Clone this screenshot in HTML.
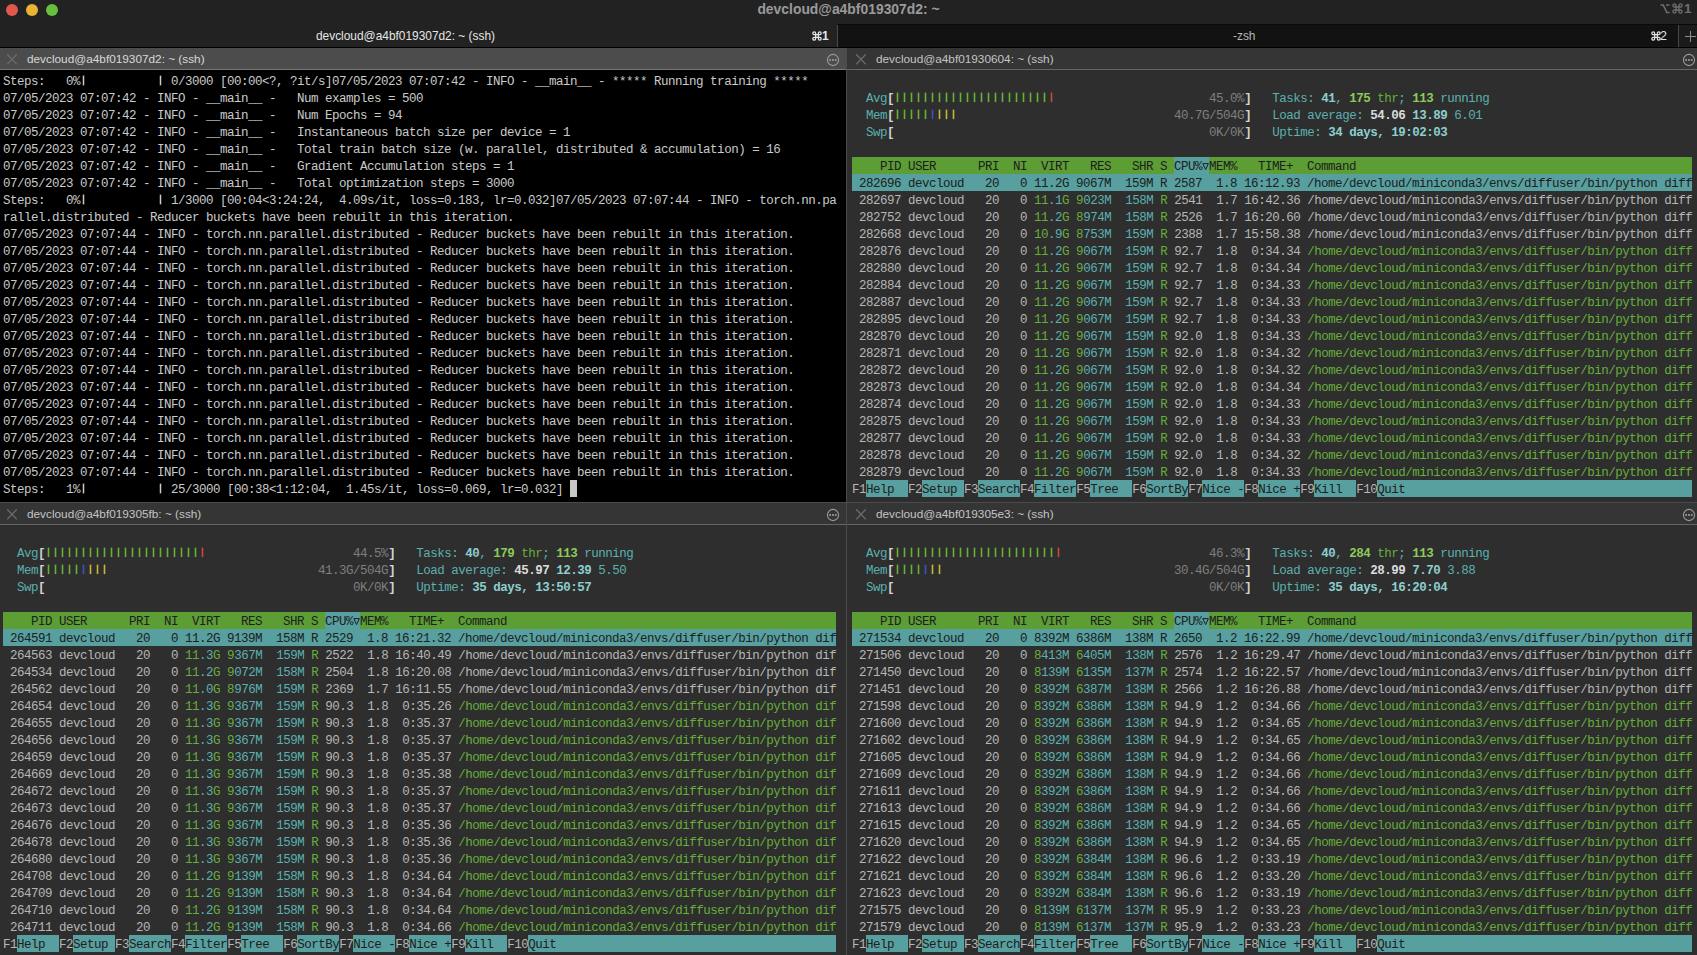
<!DOCTYPE html><html><head><meta charset="utf-8"><style>
*{margin:0;padding:0;box-sizing:border-box}
html,body{width:1697px;height:955px;overflow:hidden;background:#222222}
body{position:relative;font-family:"Liberation Sans",sans-serif}
.abs{position:absolute}
.pane{position:absolute;overflow:hidden}
.hdr{position:absolute;height:21px}
.term{position:absolute;font-family:"Liberation Mono",monospace;font-size:12.5px;letter-spacing:-0.5px;line-height:17px;white-space:pre}
.r{position:absolute;left:0;height:17px;white-space:pre}
.r span{display:inline-block;height:17px;vertical-align:top}
.tx{position:relative;top:2px}
/* htop colours (dimmed) */
.hg{color:#b6b6b6}
.hgr{color:#66ad3a}
.hcy{color:#5bb0b0}
.hdk{color:#1c2020}
.hdim{color:#7f7f7f}
.hbr{color:#d4d4d4;font-weight:bold}
.hred{color:#c0493b}
.hblu{color:#3d4fc4}
.hyel{color:#c4b23a}
.bcy{color:#8ccfcf;font-weight:bold}
.bgr{color:#8acb5a;font-weight:bold}
.bwh{color:#dcdcdc;font-weight:bold}
.bggr{background:#5c9d34}
.bgteal{background:#589f9f}
</style></head><body>
<div class="abs" style="left:0;top:0;width:1697px;height:24px;background:#222222"></div>
<div class="abs" style="left:6px;top:4px;width:12px;height:12px;border-radius:50%;background:#e0574d"></div>
<div class="abs" style="left:26px;top:4px;width:12px;height:12px;border-radius:50%;background:#ebb334"></div>
<div class="abs" style="left:46px;top:4px;width:12px;height:12px;border-radius:50%;background:#66bf3f"></div>
<div class="abs" style="left:0;top:1px;width:1697px;text-align:center;font-weight:bold;font-size:13.9px;color:#9a9a9a;line-height:17px;padding-left:0px">devcloud@a4bf019307d2: ~</div>
<svg class="abs" style="left:1660px;top:3px" width="10" height="11" viewBox="0 0 10 11"><path d="M0.5 2 H3.2 L6.8 9.5 H9.5 M6 2 H9.5" fill="none" stroke="#6e6e6e" stroke-width="1.6"/></svg>
<svg class="abs" style="left:1672px;top:3px" width="11" height="11" viewBox="0 0 12 12"><path d="M4.4 4.4 H7.6 V7.6 H4.4 Z M4.4 4.4 V2.7 A1.7 1.7 0 1 0 2.7 4.4 H4.4 M7.6 4.4 V2.7 A1.7 1.7 0 1 1 9.3 4.4 H7.6 M4.4 7.6 V9.3 A1.7 1.7 0 1 1 2.7 7.6 H4.4 M7.6 7.6 V9.3 A1.7 1.7 0 1 0 9.3 7.6 H7.6" fill="none" stroke="#6e6e6e" stroke-width="1.5"/></svg>
<div class="abs" style="left:1684px;top:0px;font-weight:bold;font-size:13.5px;color:#6e6e6e;line-height:17px">1</div>
<div class="abs" style="left:837px;top:24px;width:860px;height:1px;background:#0a0a0a"></div>
<div class="abs" style="left:0;top:24px;width:837px;height:23px;background:#222222"></div>
<div class="abs" style="left:837px;top:25px;width:1px;height:22px;background:#4a4a4a"></div>
<div class="abs" style="left:838px;top:25px;width:840px;height:22px;background:#121212"></div>
<div class="abs" style="left:1678px;top:25px;width:1px;height:22px;background:#4a4a4a"></div>
<div class="abs" style="left:1679px;top:25px;width:18px;height:22px;background:#1b1b1b"></div>
<div class="abs" style="left:1690px;top:31px;width:1px;height:11px;background:#8a8a8a"></div>
<div class="abs" style="left:1685px;top:36px;width:11px;height:1px;background:#8a8a8a"></div>
<div class="abs" style="left:316px;top:28px;font-size:11.9px;color:#e6e6e6;line-height:17px">devcloud@a4bf019307d2: ~ (ssh)</div>
<svg class="abs" style="left:812px;top:31px" width="10" height="10" viewBox="0 0 12 12"><path d="M4.4 4.4 H7.6 V7.6 H4.4 Z M4.4 4.4 V2.7 A1.7 1.7 0 1 0 2.7 4.4 H4.4 M7.6 4.4 V2.7 A1.7 1.7 0 1 1 9.3 4.4 H7.6 M4.4 7.6 V9.3 A1.7 1.7 0 1 1 2.7 7.6 H4.4 M7.6 7.6 V9.3 A1.7 1.7 0 1 0 9.3 7.6 H7.6" fill="none" stroke="#e6e6e6" stroke-width="1.5"/></svg>
<div class="abs" style="left:822px;top:28px;font-size:12px;font-weight:bold;color:#e6e6e6;line-height:17px">1</div>
<div class="abs" style="left:1233px;top:28px;font-size:11.9px;color:#b8b8b8;line-height:17px">-zsh</div>
<svg class="abs" style="left:1651px;top:31px" width="10" height="10" viewBox="0 0 12 12"><path d="M4.4 4.4 H7.6 V7.6 H4.4 Z M4.4 4.4 V2.7 A1.7 1.7 0 1 0 2.7 4.4 H4.4 M7.6 4.4 V2.7 A1.7 1.7 0 1 1 9.3 4.4 H7.6 M4.4 7.6 V9.3 A1.7 1.7 0 1 1 2.7 7.6 H4.4 M7.6 7.6 V9.3 A1.7 1.7 0 1 0 9.3 7.6 H7.6" fill="none" stroke="#e0e0e0" stroke-width="1.5"/></svg>
<div class="abs" style="left:1660px;top:28px;font-size:12.5px;color:#e0e0e0;line-height:17px">2</div>
<div class="abs" style="left:0;top:47px;width:1697px;height:1px;background:#000"></div>
<div class="abs" style="left:0;top:70px;width:846px;height:432px;background:#000"></div>
<div class="abs" style="left:847px;top:70px;width:850px;height:432px;background:#2e2e2e"></div>
<div class="abs" style="left:0;top:525px;width:846px;height:430px;background:#2e2e2e"></div>
<div class="abs" style="left:847px;top:525px;width:850px;height:430px;background:#2e2e2e"></div>
<div class="abs" style="left:846px;top:48px;width:1px;height:907px;background:#4b4b4b"></div>
<div class="abs" style="left:0;top:502px;width:1697px;height:1px;background:#4b4b4b"></div>
<div class="abs" style="left:0px;top:48px;width:846px;height:21px;background:#4c4c4c"></div>
<div class="abs" style="left:0px;top:69px;width:846px;height:1px;background:#787878"></div>
<svg class="abs" style="left:6px;top:53px" width="12" height="12" viewBox="0 0 12 12"><path d="M1.6 1.8 L10.4 10.9 M10.4 1.8 L1.6 10.9" stroke="#6c6c6c" stroke-width="1.3" stroke-linecap="round"/></svg>
<div class="abs" style="left:27px;top:51px;font-size:11.8px;color:#d8d8d8;line-height:17px;white-space:pre">devcloud@a4bf019307d2: ~ (ssh)</div>
<svg class="abs" style="left:826px;top:53px" width="14" height="14" viewBox="0 0 14 14"><circle cx="7" cy="7" r="5.6" fill="none" stroke="#9a9a9a" stroke-width="1.1"/><rect x="3.2" y="6.1" width="1.8" height="1.8" fill="#9a9a9a"/><rect x="6.1" y="6.1" width="1.8" height="1.8" fill="#9a9a9a"/><rect x="8.9" y="6.1" width="1.7" height="1.8" fill="#9a9a9a"/></svg>
<div class="abs" style="left:847px;top:48px;width:850px;height:21px;background:#353535"></div>
<div class="abs" style="left:847px;top:69px;width:850px;height:1px;background:#666666"></div>
<svg class="abs" style="left:855px;top:53px" width="12" height="12" viewBox="0 0 12 12"><path d="M1.6 1.8 L10.4 10.9 M10.4 1.8 L1.6 10.9" stroke="#6c6c6c" stroke-width="1.3" stroke-linecap="round"/></svg>
<div class="abs" style="left:876px;top:51px;font-size:11.8px;color:#c4c4c4;line-height:17px;white-space:pre">devcloud@a4bf01930604: ~ (ssh)</div>
<svg class="abs" style="left:1682px;top:53px" width="14" height="14" viewBox="0 0 14 14"><circle cx="7" cy="7" r="5.6" fill="none" stroke="#9a9a9a" stroke-width="1.1"/><rect x="3.2" y="6.1" width="1.8" height="1.8" fill="#9a9a9a"/><rect x="6.1" y="6.1" width="1.8" height="1.8" fill="#9a9a9a"/><rect x="8.9" y="6.1" width="1.7" height="1.8" fill="#9a9a9a"/></svg>
<div class="abs" style="left:0px;top:503px;width:846px;height:21px;background:#353535"></div>
<div class="abs" style="left:0px;top:524px;width:846px;height:1px;background:#666666"></div>
<svg class="abs" style="left:6px;top:508px" width="12" height="12" viewBox="0 0 12 12"><path d="M1.6 1.8 L10.4 10.9 M10.4 1.8 L1.6 10.9" stroke="#6c6c6c" stroke-width="1.3" stroke-linecap="round"/></svg>
<div class="abs" style="left:27px;top:506px;font-size:11.8px;color:#c4c4c4;line-height:17px;white-space:pre">devcloud@a4bf019305fb: ~ (ssh)</div>
<svg class="abs" style="left:826px;top:508px" width="14" height="14" viewBox="0 0 14 14"><circle cx="7" cy="7" r="5.6" fill="none" stroke="#9a9a9a" stroke-width="1.1"/><rect x="3.2" y="6.1" width="1.8" height="1.8" fill="#9a9a9a"/><rect x="6.1" y="6.1" width="1.8" height="1.8" fill="#9a9a9a"/><rect x="8.9" y="6.1" width="1.7" height="1.8" fill="#9a9a9a"/></svg>
<div class="abs" style="left:847px;top:503px;width:850px;height:21px;background:#353535"></div>
<div class="abs" style="left:847px;top:524px;width:850px;height:1px;background:#666666"></div>
<svg class="abs" style="left:855px;top:508px" width="12" height="12" viewBox="0 0 12 12"><path d="M1.6 1.8 L10.4 10.9 M10.4 1.8 L1.6 10.9" stroke="#6c6c6c" stroke-width="1.3" stroke-linecap="round"/></svg>
<div class="abs" style="left:876px;top:506px;font-size:11.8px;color:#c4c4c4;line-height:17px;white-space:pre">devcloud@a4bf019305e3: ~ (ssh)</div>
<svg class="abs" style="left:1682px;top:508px" width="14" height="14" viewBox="0 0 14 14"><circle cx="7" cy="7" r="5.6" fill="none" stroke="#9a9a9a" stroke-width="1.1"/><rect x="3.2" y="6.1" width="1.8" height="1.8" fill="#9a9a9a"/><rect x="6.1" y="6.1" width="1.8" height="1.8" fill="#9a9a9a"/><rect x="8.9" y="6.1" width="1.7" height="1.8" fill="#9a9a9a"/></svg>
<div class="term" style="left:3px;top:72px">
<div class="r" style="top:0px;"><span class="tx" style="color:#cacaca">Steps:   0%             0/3000 [00:00&lt;?, ?it/s]07/05/2023 07:07:42 - INFO - __main__ - ***** Running training *****</span></div>
<div class="r" style="top:17px;"><span class="tx" style="color:#cacaca">07/05/2023 07:07:42 - INFO - __main__ -   Num examples = 500</span></div>
<div class="r" style="top:34px;"><span class="tx" style="color:#cacaca">07/05/2023 07:07:42 - INFO - __main__ -   Num Epochs = 94</span></div>
<div class="r" style="top:51px;"><span class="tx" style="color:#cacaca">07/05/2023 07:07:42 - INFO - __main__ -   Instantaneous batch size per device = 1</span></div>
<div class="r" style="top:68px;"><span class="tx" style="color:#cacaca">07/05/2023 07:07:42 - INFO - __main__ -   Total train batch size (w. parallel, distributed &amp; accumulation) = 16</span></div>
<div class="r" style="top:85px;"><span class="tx" style="color:#cacaca">07/05/2023 07:07:42 - INFO - __main__ -   Gradient Accumulation steps = 1</span></div>
<div class="r" style="top:102px;"><span class="tx" style="color:#cacaca">07/05/2023 07:07:42 - INFO - __main__ -   Total optimization steps = 3000</span></div>
<div class="r" style="top:119px;"><span class="tx" style="color:#cacaca">Steps:   0%             1/3000 [00:04&lt;3:24:24,  4.09s/it, loss=0.183, lr=0.032]07/05/2023 07:07:44 - INFO - torch.nn.pa</span></div>
<div class="r" style="top:136px;"><span class="tx" style="color:#cacaca">rallel.distributed - Reducer buckets have been rebuilt in this iteration.</span></div>
<div class="r" style="top:153px;"><span class="tx" style="color:#cacaca">07/05/2023 07:07:44 - INFO - torch.nn.parallel.distributed - Reducer buckets have been rebuilt in this iteration.</span></div>
<div class="r" style="top:170px;"><span class="tx" style="color:#cacaca">07/05/2023 07:07:44 - INFO - torch.nn.parallel.distributed - Reducer buckets have been rebuilt in this iteration.</span></div>
<div class="r" style="top:187px;"><span class="tx" style="color:#cacaca">07/05/2023 07:07:44 - INFO - torch.nn.parallel.distributed - Reducer buckets have been rebuilt in this iteration.</span></div>
<div class="r" style="top:204px;"><span class="tx" style="color:#cacaca">07/05/2023 07:07:44 - INFO - torch.nn.parallel.distributed - Reducer buckets have been rebuilt in this iteration.</span></div>
<div class="r" style="top:221px;"><span class="tx" style="color:#cacaca">07/05/2023 07:07:44 - INFO - torch.nn.parallel.distributed - Reducer buckets have been rebuilt in this iteration.</span></div>
<div class="r" style="top:238px;"><span class="tx" style="color:#cacaca">07/05/2023 07:07:44 - INFO - torch.nn.parallel.distributed - Reducer buckets have been rebuilt in this iteration.</span></div>
<div class="r" style="top:255px;"><span class="tx" style="color:#cacaca">07/05/2023 07:07:44 - INFO - torch.nn.parallel.distributed - Reducer buckets have been rebuilt in this iteration.</span></div>
<div class="r" style="top:272px;"><span class="tx" style="color:#cacaca">07/05/2023 07:07:44 - INFO - torch.nn.parallel.distributed - Reducer buckets have been rebuilt in this iteration.</span></div>
<div class="r" style="top:289px;"><span class="tx" style="color:#cacaca">07/05/2023 07:07:44 - INFO - torch.nn.parallel.distributed - Reducer buckets have been rebuilt in this iteration.</span></div>
<div class="r" style="top:306px;"><span class="tx" style="color:#cacaca">07/05/2023 07:07:44 - INFO - torch.nn.parallel.distributed - Reducer buckets have been rebuilt in this iteration.</span></div>
<div class="r" style="top:323px;"><span class="tx" style="color:#cacaca">07/05/2023 07:07:44 - INFO - torch.nn.parallel.distributed - Reducer buckets have been rebuilt in this iteration.</span></div>
<div class="r" style="top:340px;"><span class="tx" style="color:#cacaca">07/05/2023 07:07:44 - INFO - torch.nn.parallel.distributed - Reducer buckets have been rebuilt in this iteration.</span></div>
<div class="r" style="top:357px;"><span class="tx" style="color:#cacaca">07/05/2023 07:07:44 - INFO - torch.nn.parallel.distributed - Reducer buckets have been rebuilt in this iteration.</span></div>
<div class="r" style="top:374px;"><span class="tx" style="color:#cacaca">07/05/2023 07:07:44 - INFO - torch.nn.parallel.distributed - Reducer buckets have been rebuilt in this iteration.</span></div>
<div class="r" style="top:391px;"><span class="tx" style="color:#cacaca">07/05/2023 07:07:44 - INFO - torch.nn.parallel.distributed - Reducer buckets have been rebuilt in this iteration.</span></div>
<div class="r" style="top:408px;"><span class="tx" style="color:#cacaca">Steps:   1%             25/3000 [00:38&lt;1:12:04,  1.45s/it, loss=0.069, lr=0.032] </span></div>
<svg class="abs" style="left:0;top:0" width="840" height="430"><rect x="79.75" y="3.6" width="1.5" height="9.8" fill="#cacaca"/><rect x="156.75" y="3.6" width="1.5" height="9.8" fill="#cacaca"/><rect x="79.75" y="122.6" width="1.5" height="9.8" fill="#cacaca"/><rect x="156.75" y="122.6" width="1.5" height="9.8" fill="#cacaca"/><rect x="79.75" y="411.6" width="1.5" height="9.8" fill="#cacaca"/><rect x="156.75" y="411.6" width="1.5" height="9.8" fill="#cacaca"/></svg>
</div>
<div class="abs" style="left:570px;top:480px;width:7px;height:17px;background:#c8c8c8"></div>
<div class="term" style="left:852px;top:72px">
<div class="r" style="top:17px;"><span class="tx">  <span class="hcy">Avg</span><span class="hbr">[</span>                                             <span class="hdim">45.0%</span><span class="hbr">]</span>   <span class="hcy">Tasks: </span><span class="bcy">41</span><span class="hcy">, </span><span class="bgr">175</span><span class="hgr"> thr</span><span class="hcy">; </span><span class="bgr">113</span><span class="hcy"> running</span></span></div>
<div class="r" style="top:34px;"><span class="tx">  <span class="hcy">Mem</span><span class="hbr">[</span>                                        <span class="hdim">40.7G/504G</span><span class="hbr">]</span>   <span class="hcy">Load average: </span><span class="bwh">54.06 </span><span class="bcy">13.89 </span><span class="hcy">6.01</span></span></div>
<div class="r" style="top:51px;"><span class="tx">  <span class="hcy">Swp</span><span class="hbr">[</span>                                             <span class="hdim">0K/0K</span><span class="hbr">]</span>   <span class="hcy">Uptime: </span><span class="bcy">34 days, 19:02:03</span></span></div>
<svg class="abs" style="left:0;top:17px" width="840" height="17"><rect x="44.70" y="3.6" width="1.6" height="9.5" fill="#64b134"/><rect x="51.70" y="3.6" width="1.6" height="9.5" fill="#64b134"/><rect x="58.70" y="3.6" width="1.6" height="9.5" fill="#64b134"/><rect x="65.70" y="3.6" width="1.6" height="9.5" fill="#64b134"/><rect x="72.70" y="3.6" width="1.6" height="9.5" fill="#64b134"/><rect x="79.70" y="3.6" width="1.6" height="9.5" fill="#64b134"/><rect x="86.70" y="3.6" width="1.6" height="9.5" fill="#64b134"/><rect x="93.70" y="3.6" width="1.6" height="9.5" fill="#64b134"/><rect x="100.70" y="3.6" width="1.6" height="9.5" fill="#64b134"/><rect x="107.70" y="3.6" width="1.6" height="9.5" fill="#64b134"/><rect x="114.70" y="3.6" width="1.6" height="9.5" fill="#64b134"/><rect x="121.70" y="3.6" width="1.6" height="9.5" fill="#64b134"/><rect x="128.70" y="3.6" width="1.6" height="9.5" fill="#64b134"/><rect x="135.70" y="3.6" width="1.6" height="9.5" fill="#64b134"/><rect x="142.70" y="3.6" width="1.6" height="9.5" fill="#64b134"/><rect x="149.70" y="3.6" width="1.6" height="9.5" fill="#64b134"/><rect x="156.70" y="3.6" width="1.6" height="9.5" fill="#64b134"/><rect x="163.70" y="3.6" width="1.6" height="9.5" fill="#64b134"/><rect x="170.70" y="3.6" width="1.6" height="9.5" fill="#64b134"/><rect x="177.70" y="3.6" width="1.6" height="9.5" fill="#64b134"/><rect x="184.70" y="3.6" width="1.6" height="9.5" fill="#64b134"/><rect x="191.70" y="3.6" width="1.6" height="9.5" fill="#64b134"/><rect x="198.70" y="3.6" width="1.6" height="9.5" fill="#c44a3c"/></svg>
<svg class="abs" style="left:0;top:34px" width="840" height="17"><rect x="44.70" y="3.6" width="1.6" height="9.5" fill="#64b134"/><rect x="51.70" y="3.6" width="1.6" height="9.5" fill="#64b134"/><rect x="58.70" y="3.6" width="1.6" height="9.5" fill="#64b134"/><rect x="65.70" y="3.6" width="1.6" height="9.5" fill="#64b134"/><rect x="72.70" y="3.6" width="1.6" height="9.5" fill="#64b134"/><rect x="79.70" y="3.6" width="1.6" height="9.5" fill="#3c4fc6"/><rect x="86.70" y="3.6" width="1.6" height="9.5" fill="#c2b63a"/><rect x="93.70" y="3.6" width="1.6" height="9.5" fill="#c2b63a"/><rect x="100.70" y="3.6" width="1.6" height="9.5" fill="#c2b63a"/></svg>
<div class="r" style="top:85px;width:840px;background:#5c9d34"><span class="tx hdk">    PID USER      PRI  NI  VIRT   RES   SHR S </span><span class="bgteal hdk"><span class="tx">CPU%</span><svg width="7" height="17" viewBox="0 0 7 17" style="vertical-align:top"><path d="M0.8 6.6 H6.4 L3.6 12.6 Z" fill="none" stroke="#1c2020" stroke-width="1"/></svg></span><span class="tx hdk">MEM%   TIME+  Command</span></div>
<div class="r" style="top:102px;width:840px;background:#589f9f"><span class="tx hdk"> 282696 devcloud   20   0 11.2G 9067M  159M R 2587  1.8 16:12.93 /home/devcloud/miniconda3/envs/diffuser/bin/python diff</span></div>
<div class="r" style="top:119px;"><span class="tx"><span class="hg"> 282697 devcloud   20   0 </span><span class="hgr">11</span><span class="hcy">.1</span><span class="hgr">G</span> <span class="hgr">9</span><span class="hcy">023M</span> <span class="hcy"> 158M</span> <span class="hgr">R</span> <span class="hg">2541  1.7 16:42.36 </span><span class="hg">/home/devcloud/miniconda3/envs/diffuser/bin/python diff</span></span></div>
<div class="r" style="top:136px;"><span class="tx"><span class="hg"> 282752 devcloud   20   0 </span><span class="hgr">11</span><span class="hcy">.2</span><span class="hgr">G</span> <span class="hgr">8</span><span class="hcy">974M</span> <span class="hcy"> 158M</span> <span class="hgr">R</span> <span class="hg">2526  1.7 16:20.60 </span><span class="hg">/home/devcloud/miniconda3/envs/diffuser/bin/python diff</span></span></div>
<div class="r" style="top:153px;"><span class="tx"><span class="hg"> 282668 devcloud   20   0 </span><span class="hgr">10</span><span class="hcy">.9</span><span class="hgr">G</span> <span class="hgr">8</span><span class="hcy">753M</span> <span class="hcy"> 159M</span> <span class="hgr">R</span> <span class="hg">2388  1.7 15:58.38 </span><span class="hg">/home/devcloud/miniconda3/envs/diffuser/bin/python diff</span></span></div>
<div class="r" style="top:170px;"><span class="tx"><span class="hg"> 282876 devcloud   20   0 </span><span class="hgr">11</span><span class="hcy">.2</span><span class="hgr">G</span> <span class="hgr">9</span><span class="hcy">067M</span> <span class="hcy"> 159M</span> <span class="hgr">R</span> <span class="hg">92.7  1.8  0:34.34 </span><span class="hgr">/home/devcloud/miniconda3/envs/diffuser/bin/python diff</span></span></div>
<div class="r" style="top:187px;"><span class="tx"><span class="hg"> 282880 devcloud   20   0 </span><span class="hgr">11</span><span class="hcy">.2</span><span class="hgr">G</span> <span class="hgr">9</span><span class="hcy">067M</span> <span class="hcy"> 159M</span> <span class="hgr">R</span> <span class="hg">92.7  1.8  0:34.34 </span><span class="hgr">/home/devcloud/miniconda3/envs/diffuser/bin/python diff</span></span></div>
<div class="r" style="top:204px;"><span class="tx"><span class="hg"> 282884 devcloud   20   0 </span><span class="hgr">11</span><span class="hcy">.2</span><span class="hgr">G</span> <span class="hgr">9</span><span class="hcy">067M</span> <span class="hcy"> 159M</span> <span class="hgr">R</span> <span class="hg">92.7  1.8  0:34.33 </span><span class="hgr">/home/devcloud/miniconda3/envs/diffuser/bin/python diff</span></span></div>
<div class="r" style="top:221px;"><span class="tx"><span class="hg"> 282887 devcloud   20   0 </span><span class="hgr">11</span><span class="hcy">.2</span><span class="hgr">G</span> <span class="hgr">9</span><span class="hcy">067M</span> <span class="hcy"> 159M</span> <span class="hgr">R</span> <span class="hg">92.7  1.8  0:34.33 </span><span class="hgr">/home/devcloud/miniconda3/envs/diffuser/bin/python diff</span></span></div>
<div class="r" style="top:238px;"><span class="tx"><span class="hg"> 282895 devcloud   20   0 </span><span class="hgr">11</span><span class="hcy">.2</span><span class="hgr">G</span> <span class="hgr">9</span><span class="hcy">067M</span> <span class="hcy"> 159M</span> <span class="hgr">R</span> <span class="hg">92.7  1.8  0:34.33 </span><span class="hgr">/home/devcloud/miniconda3/envs/diffuser/bin/python diff</span></span></div>
<div class="r" style="top:255px;"><span class="tx"><span class="hg"> 282870 devcloud   20   0 </span><span class="hgr">11</span><span class="hcy">.2</span><span class="hgr">G</span> <span class="hgr">9</span><span class="hcy">067M</span> <span class="hcy"> 159M</span> <span class="hgr">R</span> <span class="hg">92.0  1.8  0:34.33 </span><span class="hgr">/home/devcloud/miniconda3/envs/diffuser/bin/python diff</span></span></div>
<div class="r" style="top:272px;"><span class="tx"><span class="hg"> 282871 devcloud   20   0 </span><span class="hgr">11</span><span class="hcy">.2</span><span class="hgr">G</span> <span class="hgr">9</span><span class="hcy">067M</span> <span class="hcy"> 159M</span> <span class="hgr">R</span> <span class="hg">92.0  1.8  0:34.32 </span><span class="hgr">/home/devcloud/miniconda3/envs/diffuser/bin/python diff</span></span></div>
<div class="r" style="top:289px;"><span class="tx"><span class="hg"> 282872 devcloud   20   0 </span><span class="hgr">11</span><span class="hcy">.2</span><span class="hgr">G</span> <span class="hgr">9</span><span class="hcy">067M</span> <span class="hcy"> 159M</span> <span class="hgr">R</span> <span class="hg">92.0  1.8  0:34.32 </span><span class="hgr">/home/devcloud/miniconda3/envs/diffuser/bin/python diff</span></span></div>
<div class="r" style="top:306px;"><span class="tx"><span class="hg"> 282873 devcloud   20   0 </span><span class="hgr">11</span><span class="hcy">.2</span><span class="hgr">G</span> <span class="hgr">9</span><span class="hcy">067M</span> <span class="hcy"> 159M</span> <span class="hgr">R</span> <span class="hg">92.0  1.8  0:34.34 </span><span class="hgr">/home/devcloud/miniconda3/envs/diffuser/bin/python diff</span></span></div>
<div class="r" style="top:323px;"><span class="tx"><span class="hg"> 282874 devcloud   20   0 </span><span class="hgr">11</span><span class="hcy">.2</span><span class="hgr">G</span> <span class="hgr">9</span><span class="hcy">067M</span> <span class="hcy"> 159M</span> <span class="hgr">R</span> <span class="hg">92.0  1.8  0:34.33 </span><span class="hgr">/home/devcloud/miniconda3/envs/diffuser/bin/python diff</span></span></div>
<div class="r" style="top:340px;"><span class="tx"><span class="hg"> 282875 devcloud   20   0 </span><span class="hgr">11</span><span class="hcy">.2</span><span class="hgr">G</span> <span class="hgr">9</span><span class="hcy">067M</span> <span class="hcy"> 159M</span> <span class="hgr">R</span> <span class="hg">92.0  1.8  0:34.33 </span><span class="hgr">/home/devcloud/miniconda3/envs/diffuser/bin/python diff</span></span></div>
<div class="r" style="top:357px;"><span class="tx"><span class="hg"> 282877 devcloud   20   0 </span><span class="hgr">11</span><span class="hcy">.2</span><span class="hgr">G</span> <span class="hgr">9</span><span class="hcy">067M</span> <span class="hcy"> 159M</span> <span class="hgr">R</span> <span class="hg">92.0  1.8  0:34.33 </span><span class="hgr">/home/devcloud/miniconda3/envs/diffuser/bin/python diff</span></span></div>
<div class="r" style="top:374px;"><span class="tx"><span class="hg"> 282878 devcloud   20   0 </span><span class="hgr">11</span><span class="hcy">.2</span><span class="hgr">G</span> <span class="hgr">9</span><span class="hcy">067M</span> <span class="hcy"> 159M</span> <span class="hgr">R</span> <span class="hg">92.0  1.8  0:34.32 </span><span class="hgr">/home/devcloud/miniconda3/envs/diffuser/bin/python diff</span></span></div>
<div class="r" style="top:391px;"><span class="tx"><span class="hg"> 282879 devcloud   20   0 </span><span class="hgr">11</span><span class="hcy">.2</span><span class="hgr">G</span> <span class="hgr">9</span><span class="hcy">067M</span> <span class="hcy"> 159M</span> <span class="hgr">R</span> <span class="hg">92.0  1.8  0:34.33 </span><span class="hgr">/home/devcloud/miniconda3/envs/diffuser/bin/python diff</span></span></div>
<div class="r" style="top:408px;"><span class="hg"><span class="tx">F1</span></span><span class="bgteal hdk"><span class="tx">Help  </span></span><span class="hg"><span class="tx">F2</span></span><span class="bgteal hdk"><span class="tx">Setup </span></span><span class="hg"><span class="tx">F3</span></span><span class="bgteal hdk"><span class="tx">Search</span></span><span class="hg"><span class="tx">F4</span></span><span class="bgteal hdk"><span class="tx">Filter</span></span><span class="hg"><span class="tx">F5</span></span><span class="bgteal hdk"><span class="tx">Tree  </span></span><span class="hg"><span class="tx">F6</span></span><span class="bgteal hdk"><span class="tx">SortBy</span></span><span class="hg"><span class="tx">F7</span></span><span class="bgteal hdk"><span class="tx">Nice -</span></span><span class="hg"><span class="tx">F8</span></span><span class="bgteal hdk"><span class="tx">Nice +</span></span><span class="hg"><span class="tx">F9</span></span><span class="bgteal hdk"><span class="tx">Kill  </span></span><span class="hg"><span class="tx">F10</span></span><span class="bgteal hdk"><span class="tx">Quit                                         </span></span></div>
</div>
<div class="term" style="left:3px;top:527px">
<div class="r" style="top:17px;"><span class="tx">  <span class="hcy">Avg</span><span class="hbr">[</span>                                            <span class="hdim">44.5%</span><span class="hbr">]</span>   <span class="hcy">Tasks: </span><span class="bcy">40</span><span class="hcy">, </span><span class="bgr">179</span><span class="hgr"> thr</span><span class="hcy">; </span><span class="bgr">113</span><span class="hcy"> running</span></span></div>
<div class="r" style="top:34px;"><span class="tx">  <span class="hcy">Mem</span><span class="hbr">[</span>                                       <span class="hdim">41.3G/504G</span><span class="hbr">]</span>   <span class="hcy">Load average: </span><span class="bwh">45.97 </span><span class="bcy">12.39 </span><span class="hcy">5.50</span></span></div>
<div class="r" style="top:51px;"><span class="tx">  <span class="hcy">Swp</span><span class="hbr">[</span>                                            <span class="hdim">0K/0K</span><span class="hbr">]</span>   <span class="hcy">Uptime: </span><span class="bcy">35 days, 13:50:57</span></span></div>
<svg class="abs" style="left:0;top:17px" width="833" height="17"><rect x="44.70" y="3.6" width="1.6" height="9.5" fill="#64b134"/><rect x="51.70" y="3.6" width="1.6" height="9.5" fill="#64b134"/><rect x="58.70" y="3.6" width="1.6" height="9.5" fill="#64b134"/><rect x="65.70" y="3.6" width="1.6" height="9.5" fill="#64b134"/><rect x="72.70" y="3.6" width="1.6" height="9.5" fill="#64b134"/><rect x="79.70" y="3.6" width="1.6" height="9.5" fill="#64b134"/><rect x="86.70" y="3.6" width="1.6" height="9.5" fill="#64b134"/><rect x="93.70" y="3.6" width="1.6" height="9.5" fill="#64b134"/><rect x="100.70" y="3.6" width="1.6" height="9.5" fill="#64b134"/><rect x="107.70" y="3.6" width="1.6" height="9.5" fill="#64b134"/><rect x="114.70" y="3.6" width="1.6" height="9.5" fill="#64b134"/><rect x="121.70" y="3.6" width="1.6" height="9.5" fill="#64b134"/><rect x="128.70" y="3.6" width="1.6" height="9.5" fill="#64b134"/><rect x="135.70" y="3.6" width="1.6" height="9.5" fill="#64b134"/><rect x="142.70" y="3.6" width="1.6" height="9.5" fill="#64b134"/><rect x="149.70" y="3.6" width="1.6" height="9.5" fill="#64b134"/><rect x="156.70" y="3.6" width="1.6" height="9.5" fill="#64b134"/><rect x="163.70" y="3.6" width="1.6" height="9.5" fill="#64b134"/><rect x="170.70" y="3.6" width="1.6" height="9.5" fill="#64b134"/><rect x="177.70" y="3.6" width="1.6" height="9.5" fill="#64b134"/><rect x="184.70" y="3.6" width="1.6" height="9.5" fill="#64b134"/><rect x="191.70" y="3.6" width="1.6" height="9.5" fill="#64b134"/><rect x="198.70" y="3.6" width="1.6" height="9.5" fill="#c44a3c"/></svg>
<svg class="abs" style="left:0;top:34px" width="833" height="17"><rect x="44.70" y="3.6" width="1.6" height="9.5" fill="#64b134"/><rect x="51.70" y="3.6" width="1.6" height="9.5" fill="#64b134"/><rect x="58.70" y="3.6" width="1.6" height="9.5" fill="#64b134"/><rect x="65.70" y="3.6" width="1.6" height="9.5" fill="#64b134"/><rect x="72.70" y="3.6" width="1.6" height="9.5" fill="#64b134"/><rect x="79.70" y="3.6" width="1.6" height="9.5" fill="#3c4fc6"/><rect x="86.70" y="3.6" width="1.6" height="9.5" fill="#c2b63a"/><rect x="93.70" y="3.6" width="1.6" height="9.5" fill="#c2b63a"/><rect x="100.70" y="3.6" width="1.6" height="9.5" fill="#c2b63a"/></svg>
<div class="r" style="top:85px;width:833px;background:#5c9d34"><span class="tx hdk">    PID USER      PRI  NI  VIRT   RES   SHR S </span><span class="bgteal hdk"><span class="tx">CPU%</span><svg width="7" height="17" viewBox="0 0 7 17" style="vertical-align:top"><path d="M0.8 6.6 H6.4 L3.6 12.6 Z" fill="none" stroke="#1c2020" stroke-width="1"/></svg></span><span class="tx hdk">MEM%   TIME+  Command</span></div>
<div class="r" style="top:102px;width:833px;background:#589f9f"><span class="tx hdk"> 264591 devcloud   20   0 11.2G 9139M  158M R 2529  1.8 16:21.32 /home/devcloud/miniconda3/envs/diffuser/bin/python dif</span></div>
<div class="r" style="top:119px;"><span class="tx"><span class="hg"> 264563 devcloud   20   0 </span><span class="hgr">11</span><span class="hcy">.3</span><span class="hgr">G</span> <span class="hgr">9</span><span class="hcy">367M</span> <span class="hcy"> 159M</span> <span class="hgr">R</span> <span class="hg">2522  1.8 16:40.49 </span><span class="hg">/home/devcloud/miniconda3/envs/diffuser/bin/python dif</span></span></div>
<div class="r" style="top:136px;"><span class="tx"><span class="hg"> 264534 devcloud   20   0 </span><span class="hgr">11</span><span class="hcy">.2</span><span class="hgr">G</span> <span class="hgr">9</span><span class="hcy">072M</span> <span class="hcy"> 158M</span> <span class="hgr">R</span> <span class="hg">2504  1.8 16:20.08 </span><span class="hg">/home/devcloud/miniconda3/envs/diffuser/bin/python dif</span></span></div>
<div class="r" style="top:153px;"><span class="tx"><span class="hg"> 264562 devcloud   20   0 </span><span class="hgr">11</span><span class="hcy">.0</span><span class="hgr">G</span> <span class="hgr">8</span><span class="hcy">976M</span> <span class="hcy"> 159M</span> <span class="hgr">R</span> <span class="hg">2369  1.7 16:11.55 </span><span class="hg">/home/devcloud/miniconda3/envs/diffuser/bin/python dif</span></span></div>
<div class="r" style="top:170px;"><span class="tx"><span class="hg"> 264654 devcloud   20   0 </span><span class="hgr">11</span><span class="hcy">.3</span><span class="hgr">G</span> <span class="hgr">9</span><span class="hcy">367M</span> <span class="hcy"> 159M</span> <span class="hgr">R</span> <span class="hg">90.3  1.8  0:35.26 </span><span class="hgr">/home/devcloud/miniconda3/envs/diffuser/bin/python dif</span></span></div>
<div class="r" style="top:187px;"><span class="tx"><span class="hg"> 264655 devcloud   20   0 </span><span class="hgr">11</span><span class="hcy">.3</span><span class="hgr">G</span> <span class="hgr">9</span><span class="hcy">367M</span> <span class="hcy"> 159M</span> <span class="hgr">R</span> <span class="hg">90.3  1.8  0:35.37 </span><span class="hgr">/home/devcloud/miniconda3/envs/diffuser/bin/python dif</span></span></div>
<div class="r" style="top:204px;"><span class="tx"><span class="hg"> 264656 devcloud   20   0 </span><span class="hgr">11</span><span class="hcy">.3</span><span class="hgr">G</span> <span class="hgr">9</span><span class="hcy">367M</span> <span class="hcy"> 159M</span> <span class="hgr">R</span> <span class="hg">90.3  1.8  0:35.37 </span><span class="hgr">/home/devcloud/miniconda3/envs/diffuser/bin/python dif</span></span></div>
<div class="r" style="top:221px;"><span class="tx"><span class="hg"> 264659 devcloud   20   0 </span><span class="hgr">11</span><span class="hcy">.3</span><span class="hgr">G</span> <span class="hgr">9</span><span class="hcy">367M</span> <span class="hcy"> 159M</span> <span class="hgr">R</span> <span class="hg">90.3  1.8  0:35.37 </span><span class="hgr">/home/devcloud/miniconda3/envs/diffuser/bin/python dif</span></span></div>
<div class="r" style="top:238px;"><span class="tx"><span class="hg"> 264669 devcloud   20   0 </span><span class="hgr">11</span><span class="hcy">.3</span><span class="hgr">G</span> <span class="hgr">9</span><span class="hcy">367M</span> <span class="hcy"> 159M</span> <span class="hgr">R</span> <span class="hg">90.3  1.8  0:35.38 </span><span class="hgr">/home/devcloud/miniconda3/envs/diffuser/bin/python dif</span></span></div>
<div class="r" style="top:255px;"><span class="tx"><span class="hg"> 264672 devcloud   20   0 </span><span class="hgr">11</span><span class="hcy">.3</span><span class="hgr">G</span> <span class="hgr">9</span><span class="hcy">367M</span> <span class="hcy"> 159M</span> <span class="hgr">R</span> <span class="hg">90.3  1.8  0:35.37 </span><span class="hgr">/home/devcloud/miniconda3/envs/diffuser/bin/python dif</span></span></div>
<div class="r" style="top:272px;"><span class="tx"><span class="hg"> 264673 devcloud   20   0 </span><span class="hgr">11</span><span class="hcy">.3</span><span class="hgr">G</span> <span class="hgr">9</span><span class="hcy">367M</span> <span class="hcy"> 159M</span> <span class="hgr">R</span> <span class="hg">90.3  1.8  0:35.37 </span><span class="hgr">/home/devcloud/miniconda3/envs/diffuser/bin/python dif</span></span></div>
<div class="r" style="top:289px;"><span class="tx"><span class="hg"> 264676 devcloud   20   0 </span><span class="hgr">11</span><span class="hcy">.3</span><span class="hgr">G</span> <span class="hgr">9</span><span class="hcy">367M</span> <span class="hcy"> 159M</span> <span class="hgr">R</span> <span class="hg">90.3  1.8  0:35.36 </span><span class="hgr">/home/devcloud/miniconda3/envs/diffuser/bin/python dif</span></span></div>
<div class="r" style="top:306px;"><span class="tx"><span class="hg"> 264678 devcloud   20   0 </span><span class="hgr">11</span><span class="hcy">.3</span><span class="hgr">G</span> <span class="hgr">9</span><span class="hcy">367M</span> <span class="hcy"> 159M</span> <span class="hgr">R</span> <span class="hg">90.3  1.8  0:35.36 </span><span class="hgr">/home/devcloud/miniconda3/envs/diffuser/bin/python dif</span></span></div>
<div class="r" style="top:323px;"><span class="tx"><span class="hg"> 264680 devcloud   20   0 </span><span class="hgr">11</span><span class="hcy">.3</span><span class="hgr">G</span> <span class="hgr">9</span><span class="hcy">367M</span> <span class="hcy"> 159M</span> <span class="hgr">R</span> <span class="hg">90.3  1.8  0:35.36 </span><span class="hgr">/home/devcloud/miniconda3/envs/diffuser/bin/python dif</span></span></div>
<div class="r" style="top:340px;"><span class="tx"><span class="hg"> 264708 devcloud   20   0 </span><span class="hgr">11</span><span class="hcy">.2</span><span class="hgr">G</span> <span class="hgr">9</span><span class="hcy">139M</span> <span class="hcy"> 158M</span> <span class="hgr">R</span> <span class="hg">90.3  1.8  0:34.64 </span><span class="hgr">/home/devcloud/miniconda3/envs/diffuser/bin/python dif</span></span></div>
<div class="r" style="top:357px;"><span class="tx"><span class="hg"> 264709 devcloud   20   0 </span><span class="hgr">11</span><span class="hcy">.2</span><span class="hgr">G</span> <span class="hgr">9</span><span class="hcy">139M</span> <span class="hcy"> 158M</span> <span class="hgr">R</span> <span class="hg">90.3  1.8  0:34.64 </span><span class="hgr">/home/devcloud/miniconda3/envs/diffuser/bin/python dif</span></span></div>
<div class="r" style="top:374px;"><span class="tx"><span class="hg"> 264710 devcloud   20   0 </span><span class="hgr">11</span><span class="hcy">.2</span><span class="hgr">G</span> <span class="hgr">9</span><span class="hcy">139M</span> <span class="hcy"> 158M</span> <span class="hgr">R</span> <span class="hg">90.3  1.8  0:34.64 </span><span class="hgr">/home/devcloud/miniconda3/envs/diffuser/bin/python dif</span></span></div>
<div class="r" style="top:391px;"><span class="tx"><span class="hg"> 264711 devcloud   20   0 </span><span class="hgr">11</span><span class="hcy">.2</span><span class="hgr">G</span> <span class="hgr">9</span><span class="hcy">139M</span> <span class="hcy"> 158M</span> <span class="hgr">R</span> <span class="hg">90.3  1.8  0:34.66 </span><span class="hgr">/home/devcloud/miniconda3/envs/diffuser/bin/python dif</span></span></div>
<div class="r" style="top:408px;"><span class="hg"><span class="tx">F1</span></span><span class="bgteal hdk"><span class="tx">Help  </span></span><span class="hg"><span class="tx">F2</span></span><span class="bgteal hdk"><span class="tx">Setup </span></span><span class="hg"><span class="tx">F3</span></span><span class="bgteal hdk"><span class="tx">Search</span></span><span class="hg"><span class="tx">F4</span></span><span class="bgteal hdk"><span class="tx">Filter</span></span><span class="hg"><span class="tx">F5</span></span><span class="bgteal hdk"><span class="tx">Tree  </span></span><span class="hg"><span class="tx">F6</span></span><span class="bgteal hdk"><span class="tx">SortBy</span></span><span class="hg"><span class="tx">F7</span></span><span class="bgteal hdk"><span class="tx">Nice -</span></span><span class="hg"><span class="tx">F8</span></span><span class="bgteal hdk"><span class="tx">Nice +</span></span><span class="hg"><span class="tx">F9</span></span><span class="bgteal hdk"><span class="tx">Kill  </span></span><span class="hg"><span class="tx">F10</span></span><span class="bgteal hdk"><span class="tx">Quit                                        </span></span></div>
</div>
<div class="term" style="left:852px;top:527px">
<div class="r" style="top:17px;"><span class="tx">  <span class="hcy">Avg</span><span class="hbr">[</span>                                             <span class="hdim">46.3%</span><span class="hbr">]</span>   <span class="hcy">Tasks: </span><span class="bcy">40</span><span class="hcy">, </span><span class="bgr">284</span><span class="hgr"> thr</span><span class="hcy">; </span><span class="bgr">113</span><span class="hcy"> running</span></span></div>
<div class="r" style="top:34px;"><span class="tx">  <span class="hcy">Mem</span><span class="hbr">[</span>                                        <span class="hdim">30.4G/504G</span><span class="hbr">]</span>   <span class="hcy">Load average: </span><span class="bwh">28.99 </span><span class="bcy">7.70 </span><span class="hcy">3.88</span></span></div>
<div class="r" style="top:51px;"><span class="tx">  <span class="hcy">Swp</span><span class="hbr">[</span>                                             <span class="hdim">0K/0K</span><span class="hbr">]</span>   <span class="hcy">Uptime: </span><span class="bcy">35 days, 16:20:04</span></span></div>
<svg class="abs" style="left:0;top:17px" width="840" height="17"><rect x="44.70" y="3.6" width="1.6" height="9.5" fill="#64b134"/><rect x="51.70" y="3.6" width="1.6" height="9.5" fill="#64b134"/><rect x="58.70" y="3.6" width="1.6" height="9.5" fill="#64b134"/><rect x="65.70" y="3.6" width="1.6" height="9.5" fill="#64b134"/><rect x="72.70" y="3.6" width="1.6" height="9.5" fill="#64b134"/><rect x="79.70" y="3.6" width="1.6" height="9.5" fill="#64b134"/><rect x="86.70" y="3.6" width="1.6" height="9.5" fill="#64b134"/><rect x="93.70" y="3.6" width="1.6" height="9.5" fill="#64b134"/><rect x="100.70" y="3.6" width="1.6" height="9.5" fill="#64b134"/><rect x="107.70" y="3.6" width="1.6" height="9.5" fill="#64b134"/><rect x="114.70" y="3.6" width="1.6" height="9.5" fill="#64b134"/><rect x="121.70" y="3.6" width="1.6" height="9.5" fill="#64b134"/><rect x="128.70" y="3.6" width="1.6" height="9.5" fill="#64b134"/><rect x="135.70" y="3.6" width="1.6" height="9.5" fill="#64b134"/><rect x="142.70" y="3.6" width="1.6" height="9.5" fill="#64b134"/><rect x="149.70" y="3.6" width="1.6" height="9.5" fill="#64b134"/><rect x="156.70" y="3.6" width="1.6" height="9.5" fill="#64b134"/><rect x="163.70" y="3.6" width="1.6" height="9.5" fill="#64b134"/><rect x="170.70" y="3.6" width="1.6" height="9.5" fill="#64b134"/><rect x="177.70" y="3.6" width="1.6" height="9.5" fill="#64b134"/><rect x="184.70" y="3.6" width="1.6" height="9.5" fill="#64b134"/><rect x="191.70" y="3.6" width="1.6" height="9.5" fill="#64b134"/><rect x="198.70" y="3.6" width="1.6" height="9.5" fill="#64b134"/><rect x="205.70" y="3.6" width="1.6" height="9.5" fill="#c44a3c"/></svg>
<svg class="abs" style="left:0;top:34px" width="840" height="17"><rect x="44.70" y="3.6" width="1.6" height="9.5" fill="#64b134"/><rect x="51.70" y="3.6" width="1.6" height="9.5" fill="#64b134"/><rect x="58.70" y="3.6" width="1.6" height="9.5" fill="#64b134"/><rect x="65.70" y="3.6" width="1.6" height="9.5" fill="#64b134"/><rect x="72.70" y="3.6" width="1.6" height="9.5" fill="#3c4fc6"/><rect x="79.70" y="3.6" width="1.6" height="9.5" fill="#c2b63a"/><rect x="86.70" y="3.6" width="1.6" height="9.5" fill="#c2b63a"/></svg>
<div class="r" style="top:85px;width:840px;background:#5c9d34"><span class="tx hdk">    PID USER      PRI  NI  VIRT   RES   SHR S </span><span class="bgteal hdk"><span class="tx">CPU%</span><svg width="7" height="17" viewBox="0 0 7 17" style="vertical-align:top"><path d="M0.8 6.6 H6.4 L3.6 12.6 Z" fill="none" stroke="#1c2020" stroke-width="1"/></svg></span><span class="tx hdk">MEM%   TIME+  Command</span></div>
<div class="r" style="top:102px;width:840px;background:#589f9f"><span class="tx hdk"> 271534 devcloud   20   0 8392M 6386M  138M R 2650  1.2 16:22.99 /home/devcloud/miniconda3/envs/diffuser/bin/python diff</span></div>
<div class="r" style="top:119px;"><span class="tx"><span class="hg"> 271506 devcloud   20   0 </span><span class="hgr">8</span><span class="hcy">413M</span> <span class="hgr">6</span><span class="hcy">405M</span> <span class="hcy"> 138M</span> <span class="hgr">R</span> <span class="hg">2576  1.2 16:29.47 </span><span class="hg">/home/devcloud/miniconda3/envs/diffuser/bin/python diff</span></span></div>
<div class="r" style="top:136px;"><span class="tx"><span class="hg"> 271450 devcloud   20   0 </span><span class="hgr">8</span><span class="hcy">139M</span> <span class="hgr">6</span><span class="hcy">135M</span> <span class="hcy"> 137M</span> <span class="hgr">R</span> <span class="hg">2574  1.2 16:22.57 </span><span class="hg">/home/devcloud/miniconda3/envs/diffuser/bin/python diff</span></span></div>
<div class="r" style="top:153px;"><span class="tx"><span class="hg"> 271451 devcloud   20   0 </span><span class="hgr">8</span><span class="hcy">392M</span> <span class="hgr">6</span><span class="hcy">387M</span> <span class="hcy"> 138M</span> <span class="hgr">R</span> <span class="hg">2566  1.2 16:26.88 </span><span class="hg">/home/devcloud/miniconda3/envs/diffuser/bin/python diff</span></span></div>
<div class="r" style="top:170px;"><span class="tx"><span class="hg"> 271598 devcloud   20   0 </span><span class="hgr">8</span><span class="hcy">392M</span> <span class="hgr">6</span><span class="hcy">386M</span> <span class="hcy"> 138M</span> <span class="hgr">R</span> <span class="hg">94.9  1.2  0:34.66 </span><span class="hgr">/home/devcloud/miniconda3/envs/diffuser/bin/python diff</span></span></div>
<div class="r" style="top:187px;"><span class="tx"><span class="hg"> 271600 devcloud   20   0 </span><span class="hgr">8</span><span class="hcy">392M</span> <span class="hgr">6</span><span class="hcy">386M</span> <span class="hcy"> 138M</span> <span class="hgr">R</span> <span class="hg">94.9  1.2  0:34.65 </span><span class="hgr">/home/devcloud/miniconda3/envs/diffuser/bin/python diff</span></span></div>
<div class="r" style="top:204px;"><span class="tx"><span class="hg"> 271602 devcloud   20   0 </span><span class="hgr">8</span><span class="hcy">392M</span> <span class="hgr">6</span><span class="hcy">386M</span> <span class="hcy"> 138M</span> <span class="hgr">R</span> <span class="hg">94.9  1.2  0:34.65 </span><span class="hgr">/home/devcloud/miniconda3/envs/diffuser/bin/python diff</span></span></div>
<div class="r" style="top:221px;"><span class="tx"><span class="hg"> 271605 devcloud   20   0 </span><span class="hgr">8</span><span class="hcy">392M</span> <span class="hgr">6</span><span class="hcy">386M</span> <span class="hcy"> 138M</span> <span class="hgr">R</span> <span class="hg">94.9  1.2  0:34.66 </span><span class="hgr">/home/devcloud/miniconda3/envs/diffuser/bin/python diff</span></span></div>
<div class="r" style="top:238px;"><span class="tx"><span class="hg"> 271609 devcloud   20   0 </span><span class="hgr">8</span><span class="hcy">392M</span> <span class="hgr">6</span><span class="hcy">386M</span> <span class="hcy"> 138M</span> <span class="hgr">R</span> <span class="hg">94.9  1.2  0:34.66 </span><span class="hgr">/home/devcloud/miniconda3/envs/diffuser/bin/python diff</span></span></div>
<div class="r" style="top:255px;"><span class="tx"><span class="hg"> 271611 devcloud   20   0 </span><span class="hgr">8</span><span class="hcy">392M</span> <span class="hgr">6</span><span class="hcy">386M</span> <span class="hcy"> 138M</span> <span class="hgr">R</span> <span class="hg">94.9  1.2  0:34.66 </span><span class="hgr">/home/devcloud/miniconda3/envs/diffuser/bin/python diff</span></span></div>
<div class="r" style="top:272px;"><span class="tx"><span class="hg"> 271613 devcloud   20   0 </span><span class="hgr">8</span><span class="hcy">392M</span> <span class="hgr">6</span><span class="hcy">386M</span> <span class="hcy"> 138M</span> <span class="hgr">R</span> <span class="hg">94.9  1.2  0:34.66 </span><span class="hgr">/home/devcloud/miniconda3/envs/diffuser/bin/python diff</span></span></div>
<div class="r" style="top:289px;"><span class="tx"><span class="hg"> 271615 devcloud   20   0 </span><span class="hgr">8</span><span class="hcy">392M</span> <span class="hgr">6</span><span class="hcy">386M</span> <span class="hcy"> 138M</span> <span class="hgr">R</span> <span class="hg">94.9  1.2  0:34.65 </span><span class="hgr">/home/devcloud/miniconda3/envs/diffuser/bin/python diff</span></span></div>
<div class="r" style="top:306px;"><span class="tx"><span class="hg"> 271620 devcloud   20   0 </span><span class="hgr">8</span><span class="hcy">392M</span> <span class="hgr">6</span><span class="hcy">386M</span> <span class="hcy"> 138M</span> <span class="hgr">R</span> <span class="hg">94.9  1.2  0:34.65 </span><span class="hgr">/home/devcloud/miniconda3/envs/diffuser/bin/python diff</span></span></div>
<div class="r" style="top:323px;"><span class="tx"><span class="hg"> 271622 devcloud   20   0 </span><span class="hgr">8</span><span class="hcy">392M</span> <span class="hgr">6</span><span class="hcy">384M</span> <span class="hcy"> 138M</span> <span class="hgr">R</span> <span class="hg">96.6  1.2  0:33.19 </span><span class="hgr">/home/devcloud/miniconda3/envs/diffuser/bin/python diff</span></span></div>
<div class="r" style="top:340px;"><span class="tx"><span class="hg"> 271621 devcloud   20   0 </span><span class="hgr">8</span><span class="hcy">392M</span> <span class="hgr">6</span><span class="hcy">384M</span> <span class="hcy"> 138M</span> <span class="hgr">R</span> <span class="hg">96.6  1.2  0:33.20 </span><span class="hgr">/home/devcloud/miniconda3/envs/diffuser/bin/python diff</span></span></div>
<div class="r" style="top:357px;"><span class="tx"><span class="hg"> 271623 devcloud   20   0 </span><span class="hgr">8</span><span class="hcy">392M</span> <span class="hgr">6</span><span class="hcy">384M</span> <span class="hcy"> 138M</span> <span class="hgr">R</span> <span class="hg">96.6  1.2  0:33.19 </span><span class="hgr">/home/devcloud/miniconda3/envs/diffuser/bin/python diff</span></span></div>
<div class="r" style="top:374px;"><span class="tx"><span class="hg"> 271575 devcloud   20   0 </span><span class="hgr">8</span><span class="hcy">139M</span> <span class="hgr">6</span><span class="hcy">137M</span> <span class="hcy"> 137M</span> <span class="hgr">R</span> <span class="hg">95.9  1.2  0:33.23 </span><span class="hgr">/home/devcloud/miniconda3/envs/diffuser/bin/python diff</span></span></div>
<div class="r" style="top:391px;"><span class="tx"><span class="hg"> 271579 devcloud   20   0 </span><span class="hgr">8</span><span class="hcy">139M</span> <span class="hgr">6</span><span class="hcy">137M</span> <span class="hcy"> 137M</span> <span class="hgr">R</span> <span class="hg">95.9  1.2  0:33.23 </span><span class="hgr">/home/devcloud/miniconda3/envs/diffuser/bin/python diff</span></span></div>
<div class="r" style="top:408px;"><span class="hg"><span class="tx">F1</span></span><span class="bgteal hdk"><span class="tx">Help  </span></span><span class="hg"><span class="tx">F2</span></span><span class="bgteal hdk"><span class="tx">Setup </span></span><span class="hg"><span class="tx">F3</span></span><span class="bgteal hdk"><span class="tx">Search</span></span><span class="hg"><span class="tx">F4</span></span><span class="bgteal hdk"><span class="tx">Filter</span></span><span class="hg"><span class="tx">F5</span></span><span class="bgteal hdk"><span class="tx">Tree  </span></span><span class="hg"><span class="tx">F6</span></span><span class="bgteal hdk"><span class="tx">SortBy</span></span><span class="hg"><span class="tx">F7</span></span><span class="bgteal hdk"><span class="tx">Nice -</span></span><span class="hg"><span class="tx">F8</span></span><span class="bgteal hdk"><span class="tx">Nice +</span></span><span class="hg"><span class="tx">F9</span></span><span class="bgteal hdk"><span class="tx">Kill  </span></span><span class="hg"><span class="tx">F10</span></span><span class="bgteal hdk"><span class="tx">Quit                                         </span></span></div>
</div>
</body></html>
